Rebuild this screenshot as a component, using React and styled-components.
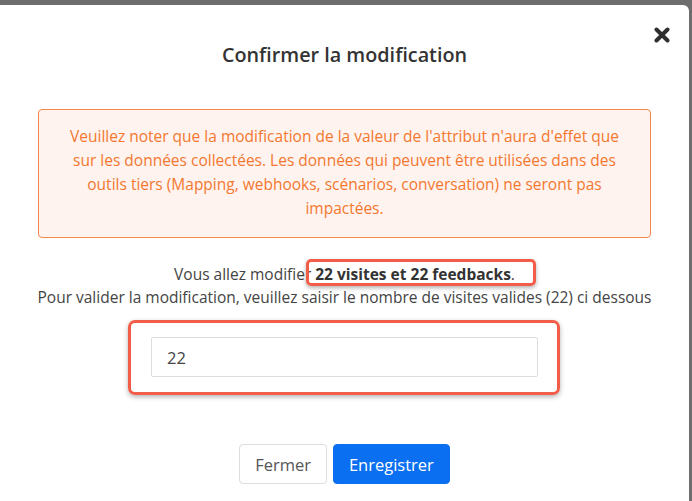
import React from "react";
import styled, { createGlobalStyle } from "styled-components";

const GlobalStyle = createGlobalStyle`
  html, body {
    margin: 0;
    padding: 0;
    background: #6e6e6e;
    font-family: "Open Sans", "Noto Sans", sans-serif;
  }
`;

const Screen = styled.div`
  min-height: 501px;
  display: flex;
  padding: 5px 3px 0 0;
  box-sizing: border-box;
  background: #6e6e6e;
`;

const Modal = styled.div`
  flex: 1;
  position: relative;
  display: flex;
  flex-direction: column;
  align-items: center;
  background: #fff;
  border-top-right-radius: 6px;
  padding-top: 37px;
`;

const CloseButton = styled.button`
  position: absolute;
  top: 22px;
  right: 19px;
  width: 16px;
  height: 16px;
  padding: 0;
  border: none;
  background: none;
  cursor: pointer;
  display: flex;
`;

const Title = styled.h2`
  margin: 0;
  font-size: 19.8px;
  line-height: 26px;
  font-weight: 600;
  color: #333;
`;

const Alert = styled.div`
  box-sizing: border-box;
  width: 613px;
  margin-top: 41px;
  padding: 14px 20px 17px;
  border: 1px solid #f5874b;
  border-radius: 4px;
  background: #fef3ef;
  color: #f3782f;
  font-size: 15.5px;
  line-height: 24px;
  text-align: center;
`;

const Message = styled.p`
  margin: 25px 0 0;
  font-size: 15.5px;
  line-height: 23px;
  color: #444;
  text-align: center;
`;

const Marked = styled.span`
  position: relative;
  font-weight: 700;
  color: #333;

  &::after {
    content: "";
    position: absolute;
    top: -4px;
    bottom: -1px;
    left: -9px;
    right: -25px;
    border: 3px solid #f25d49;
    border-radius: 5px;
    box-shadow: 0 2px 4px rgba(0, 0, 0, 0.3);
  }
`;

const FieldFrame = styled.div`
  position: relative;
  margin-top: 28px;

  &::after {
    content: "";
    position: absolute;
    top: -17px;
    bottom: -18px;
    left: -23px;
    right: -22px;
    border: 3px solid #f25d49;
    border-radius: 7px;
    box-shadow: 0 2px 5px rgba(0, 0, 0, 0.3);
    pointer-events: none;
  }
`;

const Input = styled.input`
  box-sizing: border-box;
  width: 387px;
  height: 40px;
  padding: 0 15px;
  border: 1px solid #ddd;
  border-radius: 2px;
  font-family: inherit;
  font-size: 16.5px;
  color: #444;
  outline: none;
`;

const Actions = styled.div`
  display: flex;
  gap: 6px;
  margin-top: 67px;
`;

const Button = styled.button`
  height: 40px;
  padding: 0 15px;
  border-radius: 4px;
  font-family: inherit;
  font-size: 16.5px;
  border: 1px solid ${(p) => (p.$primary ? "#0a6ff0" : "#ddd")};
  background: ${(p) => (p.$primary ? "#0a6ff0" : "#fff")};
  color: ${(p) => (p.$primary ? "#fff" : "#555")};
  cursor: pointer;
`;

const App = () => {
  return (
    <>
      <GlobalStyle />
      <Screen>
        <Modal>
          <CloseButton aria-label="Fermer">
            <svg width="16" height="16" viewBox="0 0 16 16">
              <path
                d="M2.5 2.5 L13.5 13.5 M13.5 2.5 L2.5 13.5"
                stroke="#2f2f2f"
                strokeWidth="4"
                strokeLinecap="round"
              />
            </svg>
          </CloseButton>
          <Title>Confirmer la modification</Title>
          <Alert>
            Veuillez noter que la modification de la valeur de l'attribut n'aura d'effet que
            sur les données collectées. Les données qui peuvent être utilisées dans des outils
            tiers (Mapping, webhooks, scénarios, conversation) ne seront pas impactées.
          </Alert>
          <Message>
            Vous allez modifier <Marked>22 visites et 22 feedbacks</Marked>.
            <br />
            Pour valider la modification, veuillez saisir le nombre de visites valides (22) ci dessous
          </Message>
          <FieldFrame>
            <Input defaultValue="22" />
          </FieldFrame>
          <Actions>
            <Button>Fermer</Button>
            <Button $primary>Enregistrer</Button>
          </Actions>
        </Modal>
      </Screen>
    </>
  );
};

export default App;
